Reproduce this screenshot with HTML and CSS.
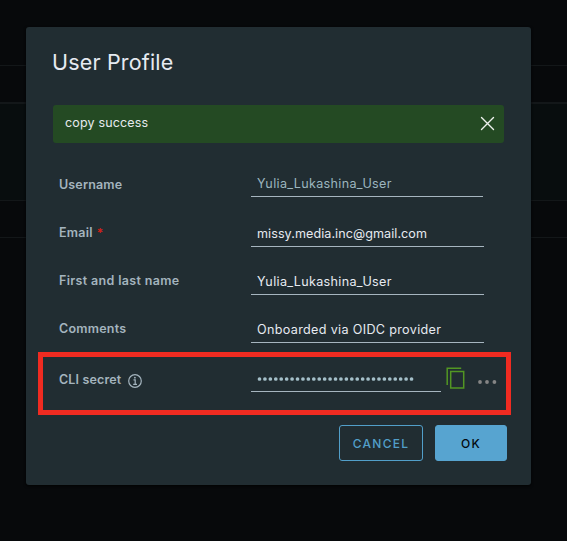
FILE: index.html
```html
<!DOCTYPE html>
<html lang="en">
<head>
<meta charset="utf-8">
<title>User Profile</title>
<link rel="stylesheet" href="styles.css">
</head>
<body>
<div class="page">
  <div class="page-rows"><div class="toolbar"></div><div class="head"></div><div class="content"></div><div class="foot"></div></div>
  <section class="modal">
    <h1 class="title"><span>User Profile</span></h1>
    <div class="alert">
      <span class="alert-text">copy success</span>
      <svg class="close" viewBox="0 0 15 15"><path d="M1.5 1.5l12 12M13.5 1.5l-12 12"/></svg>
    </div>
    <div class="form">
      <div class="row first"><div class="label low"><span class="l-user">Username</span></div><div class="field readonly"><span class="v-name">Yulia_Lukashina_User</span></div></div>
      <div class="row email"><div class="label"><span class="l-email">Email</span><span class="star">*</span></div><div class="field"><span class="v-email">missy.media.inc@gmail.com</span></div></div>
      <div class="row"><div class="label"><span class="l-full">First and last name</span></div><div class="field"><span class="v-name">Yulia_Lukashina_User</span></div></div>
      <div class="row"><div class="label"><span class="l-comments">Comments</span></div><div class="field"><span class="v-comments">Onboarded via OIDC provider</span></div></div>
      <div class="row secret">
        <div class="label low"><span class="l-secret">CLI secret</span>
          <svg class="info" viewBox="0 0 14 14"><circle cx="7" cy="7" r="6.3"/><path d="M5.5 5.9h1.7v4.3M5.2 10.3h3.8"/><circle class="dot" cx="6.9" cy="3.7" r=".9"/></svg>
        </div>
        <div class="field password">
          <svg class="dots" viewBox="0 0 160 6"><path d="M2.5 3H156"/></svg>
        </div>
        <svg class="copy" viewBox="0 0 19 22"><path d="M1.2 18V1.2h14"/><path d="M4.7 4.5h13v16.5h-13z"/></svg>
        <svg class="more" viewBox="0 0 20 6"><circle cx="3" cy="3" r="1.9"/><circle cx="10" cy="3" r="1.9"/><circle cx="17.4" cy="3" r="1.9"/></svg>
      </div>
    </div>
    <div class="actions"><button class="cancel">CANCEL</button><button class="ok">OK</button></div>
    <div class="highlight"></div>
  </section>
</div>
</body>
</html>
```
FILE: styles.css
```css
* { box-sizing: border-box; }
body { margin: 0; background: #07090b; font-family: Inter, "Liberation Sans", sans-serif; }
.page { position: relative; width: 567px; height: 541px; padding: 27px 36px 0 26px; overflow: hidden; }
.page-rows { position: absolute; inset: 0; }
.toolbar { height: 66px; border-bottom: 1px solid #131719; }
.head { height: 38px; border-bottom: 2px solid #131719; }
.content { height: 97px; background: #080d0e; border-bottom: 1px solid #131719; }
.foot { height: 37px; border-bottom: 1px solid #131719; }
.modal { position: relative; width: 505px; height: 458px; padding: 21px 24px 24px 27px; background: #212d32; border-radius: 3px; box-shadow: 0 1px 3px #020303; }
.title { display: flex; margin: 0 0 0 -1px; height: 57px; font-size: 21.5px; line-height: 29px; font-weight: 400; color: #e6eaf1; letter-spacing: .18px; white-space: nowrap; }
.alert { display: flex; align-items: center; justify-content: space-between; width: 451px; height: 38px; padding: 0 9px 0 12px; border-radius: 3px; background: #244a23; color: #e6eaee; }
.alert-text { font-size: 12.5px; line-height: 18px; margin-bottom: 2px; letter-spacing: .16px; }
.close { width: 15px; height: 15px; margin-bottom: 1px; fill: none; stroke: #eef2ed; stroke-width: 1.4; stroke-linecap: round; }
.form { padding: 30px 0 0 6px; }
.row { display: flex; height: 24px; margin-bottom: 24px; }
.row.first { margin-bottom: 26px; }
.row.first .field { width: 232px; }
.row:nth-child(4) { margin-bottom: 25px; }
.label { display: flex; width: 192px; height: 20px; line-height: 20px; font-size: 12.5px; font-weight: 600; color: #a4b4be; white-space: nowrap; }
.label.low { padding-top: 2px; height: 24px; }
.l-user, .l-secret { letter-spacing: .15px; }
.l-email { letter-spacing: .25px; }
.l-full { letter-spacing: .34px; }
.l-comments { letter-spacing: .22px; }
.star { color: #d51f17; margin-left: 4px; font-size: 12px; }
.field { width: 233px; height: 24px; padding-left: 6px; border-bottom: 1px solid #a6b5bf; font-size: 12.6px; line-height: 21px; color: #e6eaf1; white-space: nowrap; }
.v-name { letter-spacing: .32px; }
.v-email { letter-spacing: .06px; }
.v-comments { letter-spacing: .33px; }
.readonly { color: #9bb5bf; }
.info { width: 14px; height: 14px; margin: 4px 0 0 6.5px; fill: none; stroke: #a4b4be; stroke-width: 1.2; }
.info .dot { fill: #a4b4be; stroke: none; }
.secret { margin-bottom: 0; }
.password { width: 190px; padding-top: 8px; }
.dots { display: block; width: 160px; height: 6px; fill: none; stroke: #a5c0ca; stroke-width: 3.7; stroke-linecap: round; stroke-dasharray: 0 5.43; }
.copy { width: 19px; height: 22px; margin: -1px 0 0 4.5px; fill: none; stroke: #529623; stroke-width: 1.5; }
.more { width: 20px; height: 6px; margin: 10.5px 0 0 12px; fill: #858585; }
.actions { display: flex; gap: 12px; justify-content: flex-end; padding-top: 33px; }
button { height: 36px; padding: 0; border-radius: 3px; font: 500 12px/35px Inter, sans-serif; letter-spacing: 1.3px; border: 1px solid #529fc9; }
.cancel { width: 84px; background: transparent; color: #529fc9; }
.ok { width: 72px; background: #57a4d0; border-color: #57a4d0; color: #030a0f; }
.highlight { position: absolute; left: 12px; top: 325px; width: 473px; height: 63px; border: 5px solid #f02b21; }
```
